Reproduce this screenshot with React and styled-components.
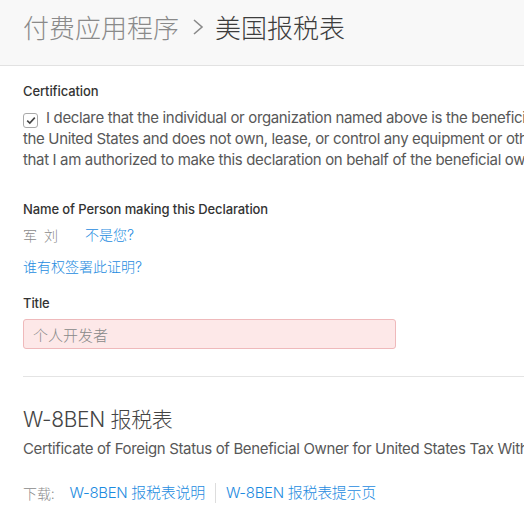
import React from "react";
import styled, { createGlobalStyle } from "styled-components";

const Global = createGlobalStyle`
  html, body { margin: 0; padding: 0; background: #fff; overflow: hidden; }
  body { font-family: Inter, "Noto Sans CJK SC", sans-serif; -webkit-font-smoothing: antialiased; }
`;

const Page = styled.div`
  width: 524px;
  height: 515px;
  overflow: hidden;
`;

const Header = styled.header`
  height: 66px;
  background: #f8f8f8;
  border-bottom: 1px solid #e2e2e2;
  display: flex;
  align-items: center;
  padding: 0 0 12px 23px;
  box-sizing: border-box;
  font-family: "Noto Sans CJK SC", sans-serif;
  font-weight: 300;
  font-size: 26px;
  white-space: nowrap;
`;

const Crumb = styled.span`
  color: ${(p) => (p.$current ? "#3d3d3d" : "#8a8a8a")};
`;

const Chevron = styled.svg`
  width: 14px;
  height: 20px;
  margin: 0 10px 0 12px;
`;

const Content = styled.main`
  width: 1000px;
  padding: 16px 0 0 23px;
  box-sizing: border-box;
`;

const Label = styled.div`
  font-size: 13px;
  font-weight: 500;
  color: #333;
  line-height: 18px;
  letter-spacing: -0.1px;
`;

const Declaration = styled.p`
  margin: 7px 0 0;
  font-size: 15px;
  line-height: 21px;
  color: #585858;
  letter-spacing: -0.35px;
  white-space: nowrap;
`;

const Check = styled.span`
  display: inline-flex;
  align-items: center;
  justify-content: center;
  width: 13px;
  height: 13px;
  border: 1px solid #a9a9a9;
  border-radius: 3px;
  vertical-align: -2px;
  margin-right: 8px;
  background: #fff;
`;

const Section = styled.section`
  margin-top: ${(p) => p.$mt || 0}px;
`;

const NameRow = styled.div`
  display: flex;
  align-items: center;
  gap: 25px;
  margin-top: 7px;
  font-family: "Noto Sans CJK SC", sans-serif;
  font-size: 14px;
  line-height: 20px;
`;

const Muted = styled.span`
  color: #8a8a8a;
  letter-spacing: 2px;
  font-weight: 300;
`;

const Link = styled.a`
  color: #1d8be0;
  text-decoration: none;
  font-family: Inter, "Noto Sans CJK SC", sans-serif;
  font-size: ${(p) => p.$size || 14}px;
  font-weight: 300;
  letter-spacing: ${(p) => (p.$size ? "-0.3px" : "0")};
`;

const Block = styled.div`
  margin-top: ${(p) => p.$mt || 0}px;
  line-height: 20px;
`;

const Input = styled.div`
  margin-top: 7px;
  width: 373px;
  height: 30px;
  box-sizing: border-box;
  background: #fde8e8;
  border: 1px solid #efb9bb;
  border-radius: 3px;
  display: flex;
  align-items: center;
  padding-left: 9px;
  font-family: "Noto Sans CJK SC", sans-serif;
  font-weight: 300;
  font-size: 15px;
  color: #888;
`;

const Divider = styled.hr`
  margin: 27px 0 0;
  border: 0;
  border-top: 1px solid #e4e4e4;
`;

const FormTitle = styled.h2`
  margin: 28px 0 0;
  font-size: 21px;
  font-weight: 300;
  color: #444;
  line-height: 30px;
  letter-spacing: -0.3px;
`;

const Subtitle = styled.p`
  margin: 4px 0 0;
  font-size: 15px;
  color: #585858;
  line-height: 20px;
  letter-spacing: -0.35px;
  white-space: nowrap;
`;

const Downloads = styled.div`
  display: flex;
  align-items: center;
  margin-top: 24px;
  font-size: 14px;
  line-height: 20px;
  white-space: nowrap;
`;

const DlLabel = styled.span`
  color: #8a8a8a;
  font-family: "Noto Sans CJK SC", sans-serif;
  font-weight: 300;
  margin-right: 15px;
`;

const Sep = styled.span`
  width: 1px;
  height: 20px;
  background: #ddd;
  margin: 0 10px;
`;

export default function App() {
  return (
    <>
      <Global />
      <Page>
        <Header>
          <Crumb>付费应用程序</Crumb>
          <Chevron viewBox="0 0 14 20">
            <path d="M3 3 L11 10 L3 17" fill="none" stroke="#8a8a8a" strokeWidth="1.6" />
          </Chevron>
          <Crumb $current>美国报税表</Crumb>
        </Header>
        <Content>
          <Label>Certification</Label>
          <Declaration>
            <Check>
              <svg width="10" height="9" viewBox="0 0 10 9">
                <path d="M1.2 4.6 L3.8 7 L8.8 1.6" fill="none" stroke="#444" strokeWidth="1.6" />
              </svg>
            </Check>
            I declare that the individual or organization named above is the beneficial owner of the income, is not a resident of
            <br />
            the United States and does not own, lease, or control any equipment or other property in the United States. I certify
            <br />
            that I am authorized to make this declaration on behalf of the beneficial owner of the income.
          </Declaration>
          <Section $mt={30}>
            <Label>Name of Person making this Declaration</Label>
            <NameRow>
              <Muted>军 刘</Muted>
              <Link>不是您?</Link>
            </NameRow>
            <Block $mt={11}>
              <Link>谁有权签署此证明?</Link>
            </Block>
          </Section>
          <Section $mt={17}>
            <Label>Title</Label>
            <Input>个人开发者</Input>
          </Section>
          <Divider />
          <FormTitle>W-8BEN 报税表</FormTitle>
          <Subtitle>Certificate of Foreign Status of Beneficial Owner for United States Tax Withholding</Subtitle>
          <Downloads>
            <DlLabel>下载:</DlLabel>
            <Link $size={15}>W-8BEN 报税表说明</Link>
            <Sep />
            <Link $size={15}>W-8BEN 报税表提示页</Link>
          </Downloads>
        </Content>
      </Page>
    </>
  );
}
